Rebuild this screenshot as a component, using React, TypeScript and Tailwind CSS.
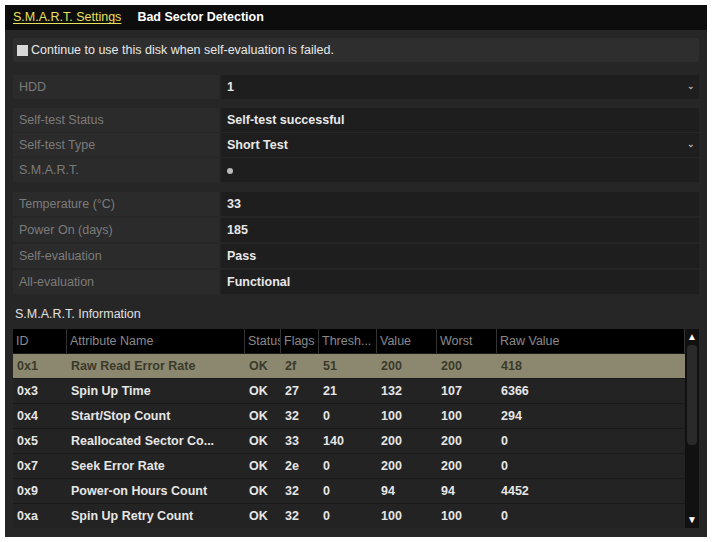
const rows = [
  ["0x1","Raw Read Error Rate","OK","2f","51","200","200","418"],
  ["0x3","Spin Up Time","OK","27","21","132","107","6366"],
  ["0x4","Start/Stop Count","OK","32","0","100","100","294"],
  ["0x5","Reallocated Sector Co...","OK","33","140","200","200","0"],
  ["0x7","Seek Error Rate","OK","2e","0","200","200","0"],
  ["0x9","Power-on Hours Count","OK","32","0","94","94","4452"],
  ["0xa","Spin Up Retry Count","OK","32","0","100","100","0"],
];
const widths = ["w-[54px]","w-[178px]","w-[36px]","w-[38px]","w-[58px]","w-[60px]","w-[60px]","flex-1"];
const heads = ["ID","Attribute Name","Status","Flags","Thresh...","Value","Worst","Raw Value"];

function Row({ label, value, chev, dot }: { label: string; value?: string; chev?: boolean; dot?: boolean }) {
  return (
    <div className="flex h-[24px] items-stretch gap-[2px]">
      <div className="w-[206px] bg-[#2b2b2b] text-[#7b7b7b] pl-[6px] flex items-center">{label}</div>
      <div className="flex-1 bg-[#1e1e1e] text-[#e8e8e8] font-bold pl-[6px] pr-[4px] flex items-center justify-between">
        <span>{dot ? <span className="inline-block w-[6px] h-[6px] rounded-full bg-[#bbb]" /> : value}</span>
        {chev && <span className="text-[9px] text-[#aaa]">⌄</span>}
      </div>
    </div>
  );
}

export default function App() {
  return (
    <div className="w-[712px] h-[542px] bg-white p-[5px]" style={{ fontFamily: '"Liberation Sans", Arial, sans-serif' }}>
      <div className="h-full bg-[#262626] text-[12.5px] flex flex-col">
        <div className="h-[25px] bg-[#0d0d0d] flex items-center pl-[8px] gap-[16px]">
          <span className="text-[#e6e05a] underline underline-offset-2">S.M.A.R.T. Settings</span>
          <span className="text-white font-bold">Bad Sector Detection</span>
        </div>
        <div className="px-[8px] pt-[8px] flex flex-col">
          <div className="h-[24px] bg-[#2e2e2e] rounded-sm flex items-center pl-[4px] gap-[3px] text-[#e8e8e8]">
            <span className="w-[11px] h-[11px] bg-[#d8d8d8]" />
            <span>Continue to use this disk when self-evaluation is failed.</span>
          </div>
          <div className="mt-[13px]"><Row label="HDD" value="1" chev /></div>
          <div className="mt-[9px] flex flex-col gap-[1px]">
            <Row label="Self-test Status" value="Self-test successful" />
            <Row label="Self-test Type" value="Short Test" chev />
            <Row label="S.M.A.R.T." dot />
          </div>
          <div className="mt-[10px] flex flex-col gap-[2px]">
            <Row label="Temperature (°C)" value="33" />
            <Row label="Power On (days)" value="185" />
            <Row label="Self-evaluation" value="Pass" />
            <Row label="All-evaluation" value="Functional" />
          </div>
          <div className="mt-[9px] text-[#e0e0e0] h-[22px] flex items-center pl-[2px]">S.M.A.R.T. Information</div>
          <div className="flex mt-[4px] bg-[#1a1a1a]">
            <div className="flex-1 flex flex-col">
              <div className="flex h-[24px] bg-black text-[#8a8a8a]">
                {heads.map((h, i) => (
                  <div key={h} className={`${widths[i]} pl-[3px] flex items-center whitespace-nowrap overflow-hidden border-r border-[#333]`}>{h}</div>
                ))}
              </div>
              {rows.map((r, ri) => (
                <div key={ri} className={`flex h-[24px] mt-[1px] font-bold ${ri===0?"bg-[#8c8870] text-[#3a3a2a]":"bg-[#232323] text-[#e6e6e6]"}`}>
                  {r.map((c, i) => (
                    <div key={i} className={`${widths[i]} pl-[4px] flex items-center whitespace-nowrap overflow-hidden`}>{c}</div>
                  ))}
                </div>
              ))}
            </div>
            <div className="w-[14px] bg-[#111] flex flex-col items-center">
              <span className="text-white text-[10px] leading-[16px]">▲</span>
              <div className="w-[10px] h-[100px] bg-[#2a2a2a] rounded-sm" />
              <div className="flex-1" />
              <span className="text-white text-[10px] leading-[16px]">▼</span>
            </div>
          </div>
        </div>
      </div>
    </div>
  );
}
